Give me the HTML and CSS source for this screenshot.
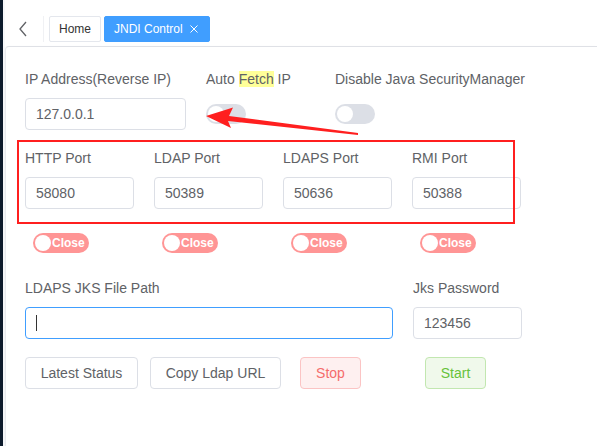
FILE: index.html
```html
<!DOCTYPE html>
<html lang="en">
<head>
  <meta charset="UTF-8">
  <title>JNDI Control</title>
  <link rel="stylesheet" href="styles.css">
</head>
<body>
  <div class="app">
    <aside class="side"></aside>

    <main class="main">
      <!-- Tabs Bar -->
      <div class="tabs-bar">
        <button class="back-btn" aria-label="Back">
          <svg width="10" height="16" viewBox="0 0 10 16"><path d="M8 1 L2 8 L8 15" fill="none" stroke="#606266" stroke-width="1.3"/></svg>
        </button>
        <span class="divider"></span>
        <span class="tag">Home</span>
        <span class="tag tag-active">JNDI Control
          <svg class="tag-close" width="8" height="8" viewBox="0 0 8 8"><path d="M0.5 0.5 L7.5 7.5 M7.5 0.5 L0.5 7.5" stroke="#fff" stroke-width="1"/></svg>
        </span>
      </div>

      <!-- Form Card -->
      <section class="card">
        <div class="row">
          <div class="item item-ip">
            <label class="label">IP Address(Reverse IP)</label>
            <input class="input" type="text" value="127.0.0.1">
          </div>
          <div class="item item-col">
            <label class="label">Auto <span class="mark">Fetch</span> IP</label>
            <div class="field-box"><span class="switch"></span></div>
          </div>
          <div class="item">
            <label class="label">Disable Java SecurityManager</label>
            <div class="field-box"><span class="switch"></span></div>
          </div>
        </div>

        <div class="row row-ports">
          <div class="item item-col">
            <label class="label">HTTP Port</label>
            <input class="input input-port" type="text" value="58080">
          </div>
          <div class="item item-col">
            <label class="label">LDAP Port</label>
            <input class="input input-port" type="text" value="50389">
          </div>
          <div class="item item-col">
            <label class="label">LDAPS Port</label>
            <input class="input input-port" type="text" value="50636">
          </div>
          <div class="item item-col">
            <label class="label">RMI Port</label>
            <input class="input input-port" type="text" value="50388">
          </div>
        </div>

        <div class="row row-switches">
          <div class="item-col"><span class="text-switch">Close</span></div>
          <div class="item-col"><span class="text-switch">Close</span></div>
          <div class="item-col"><span class="text-switch">Close</span></div>
          <div class="item-col"><span class="text-switch">Close</span></div>
        </div>

        <div class="row row-jks">
          <div class="item item-path">
            <label class="label">LDAPS JKS File Path</label>
            <div class="input input-focus"><span class="caret"></span></div>
          </div>
          <div class="item">
            <label class="label">Jks Password</label>
            <input class="input input-port" type="text" value="123456">
          </div>
        </div>

        <div class="row row-buttons">
          <button class="btn btn-status">Latest Status</button>
          <button class="btn btn-copy">Copy Ldap URL</button>
          <button class="btn btn-stop">Stop</button>
          <button class="btn btn-start">Start</button>
        </div>
      </section>
    </main>

    <!-- Annotation overlay -->
    <div class="note-box"></div>
    <svg class="note-arrow" width="597" height="446" viewBox="0 0 597 446">
      <polygon points="206,116 233,107.5 229,116 358,133 358,135 228,121 231,128" fill="#ff1f1f"/>
    </svg>
  </div>
</body>
</html>
```

FILE: styles.css
```css
/* Global Styles */
* {
  box-sizing: border-box;
  margin: 0;
  padding: 0;
}

body {
  font-family: "Liberation Sans", Arial, sans-serif;
  color: #606266;
  background-color: #fff;
}

.app {
  position: relative;
  display: flex;
  width: 597px;
  height: 446px;
  overflow: hidden;
}

.side {
  width: 3px;
  background-color: #0d1b2c;
}

.main {
  flex: 1;
  display: flex;
  flex-direction: column;
  border-left: 2px solid #f7f8fa;
}

/* Tabs Bar */
.tabs-bar {
  height: 46px;
  display: flex;
  align-items: center;
  padding-top: 12px;
  margin-left: -2px;
}

.back-btn {
  width: 40px;
  height: 26px;
  border: none;
  background: none;
  display: flex;
  align-items: center;
  justify-content: center;
}

.divider {
  width: 1px;
  height: 26px;
  background-color: #f0f1f4;
  margin-right: 5px;
}

.tag {
  height: 26px;
  line-height: 24px;
  padding: 0 9px;
  font-size: 12px;
  color: #333;
  border: 1px solid #e4e7ed;
  border-radius: 2px;
  margin-right: 5px;
  display: flex;
  align-items: center;
}

.tag-active {
  background-color: #409eff;
  border-color: #409eff;
  color: #fff;
  padding-right: 11px;
  margin-left: -2px;
}

.tag-close {
  margin-left: 7px;
}

/* Card */
.card {
  flex: 1;
  border-top: 1px solid #dfe1e6;
  border-left: 1px solid #e8eaee;
  border-top-left-radius: 4px;
  box-shadow: 0 2px 4px rgba(0, 0, 0, 0.04);
  padding: 22px 0 0 19px;
}

.row {
  display: flex;
}

.item {
  display: flex;
  flex-direction: column;
}

.item-ip {
  width: 181px;
}

.item-col {
  width: 129px;
}

.item-path {
  width: 388px;
}

.label {
  font-size: 14px;
  line-height: 20px;
  margin-bottom: 9px;
  white-space: nowrap;
}

.mark {
  background-color: #ffff99;
}

.input {
  width: 161px;
  height: 32px;
  border: 1px solid #dcdfe6;
  border-radius: 4px;
  padding: 0 10px;
  font-family: inherit;
  font-size: 14px;
  color: #606266;
  outline: none;
}

.input-port {
  width: 109px;
}

.input-focus {
  width: 368px;
  border-color: #409eff;
  display: flex;
  align-items: center;
}

.caret {
  width: 1px;
  height: 16px;
  background-color: #333;
}

.field-box {
  height: 32px;
  display: flex;
  align-items: center;
}

.switch {
  position: relative;
  width: 40px;
  height: 20px;
  border-radius: 10px;
  background-color: #dcdfe6;
}

.switch::after {
  content: "";
  position: absolute;
  top: 2px;
  left: 2px;
  width: 16px;
  height: 16px;
  border-radius: 50%;
  background-color: #fff;
}

.row-ports {
  margin-top: 18px;
}

.row-switches {
  margin-top: 24px;
  padding-left: 8px;
}

.text-switch {
  position: relative;
  display: inline-block;
  height: 20px;
  line-height: 20px;
  padding: 0 4px 0 19px;
  border-radius: 10px;
  background-color: #ff9595;
  color: #fff;
  font-size: 12px;
  font-weight: bold;
}

.text-switch::before {
  content: "";
  position: absolute;
  top: 2px;
  left: 2px;
  width: 16px;
  height: 16px;
  border-radius: 50%;
  background-color: #fff;
}

.row-jks {
  margin-top: 25px;
}

/* Buttons */
.row-buttons {
  margin-top: 18px;
}

.btn {
  height: 32px;
  border: 1px solid #dcdfe6;
  border-radius: 4px;
  background-color: #fff;
  color: #606266;
  font-family: inherit;
  font-size: 14px;
  padding: 0;
  white-space: nowrap;
}

.btn-status {
  width: 113px;
}

.btn-copy {
  width: 131px;
  margin-left: 12px;
}

.btn-stop {
  width: 61px;
  margin-left: 19px;
  background-color: #fef0f0;
  border-color: #fbc4c4;
  color: #f56c6c;
}

.btn-start {
  width: 61px;
  margin-left: 64px;
  background-color: #f0f9eb;
  border-color: #c2e7b0;
  color: #67c23a;
}

/* Annotation overlay */
.note-box {
  position: absolute;
  left: 17px;
  top: 140px;
  width: 498px;
  height: 84px;
  border: 2px solid #ff1f1f;
  pointer-events: none;
}

.note-arrow {
  position: absolute;
  left: 0;
  top: 0;
  pointer-events: none;
}
```
